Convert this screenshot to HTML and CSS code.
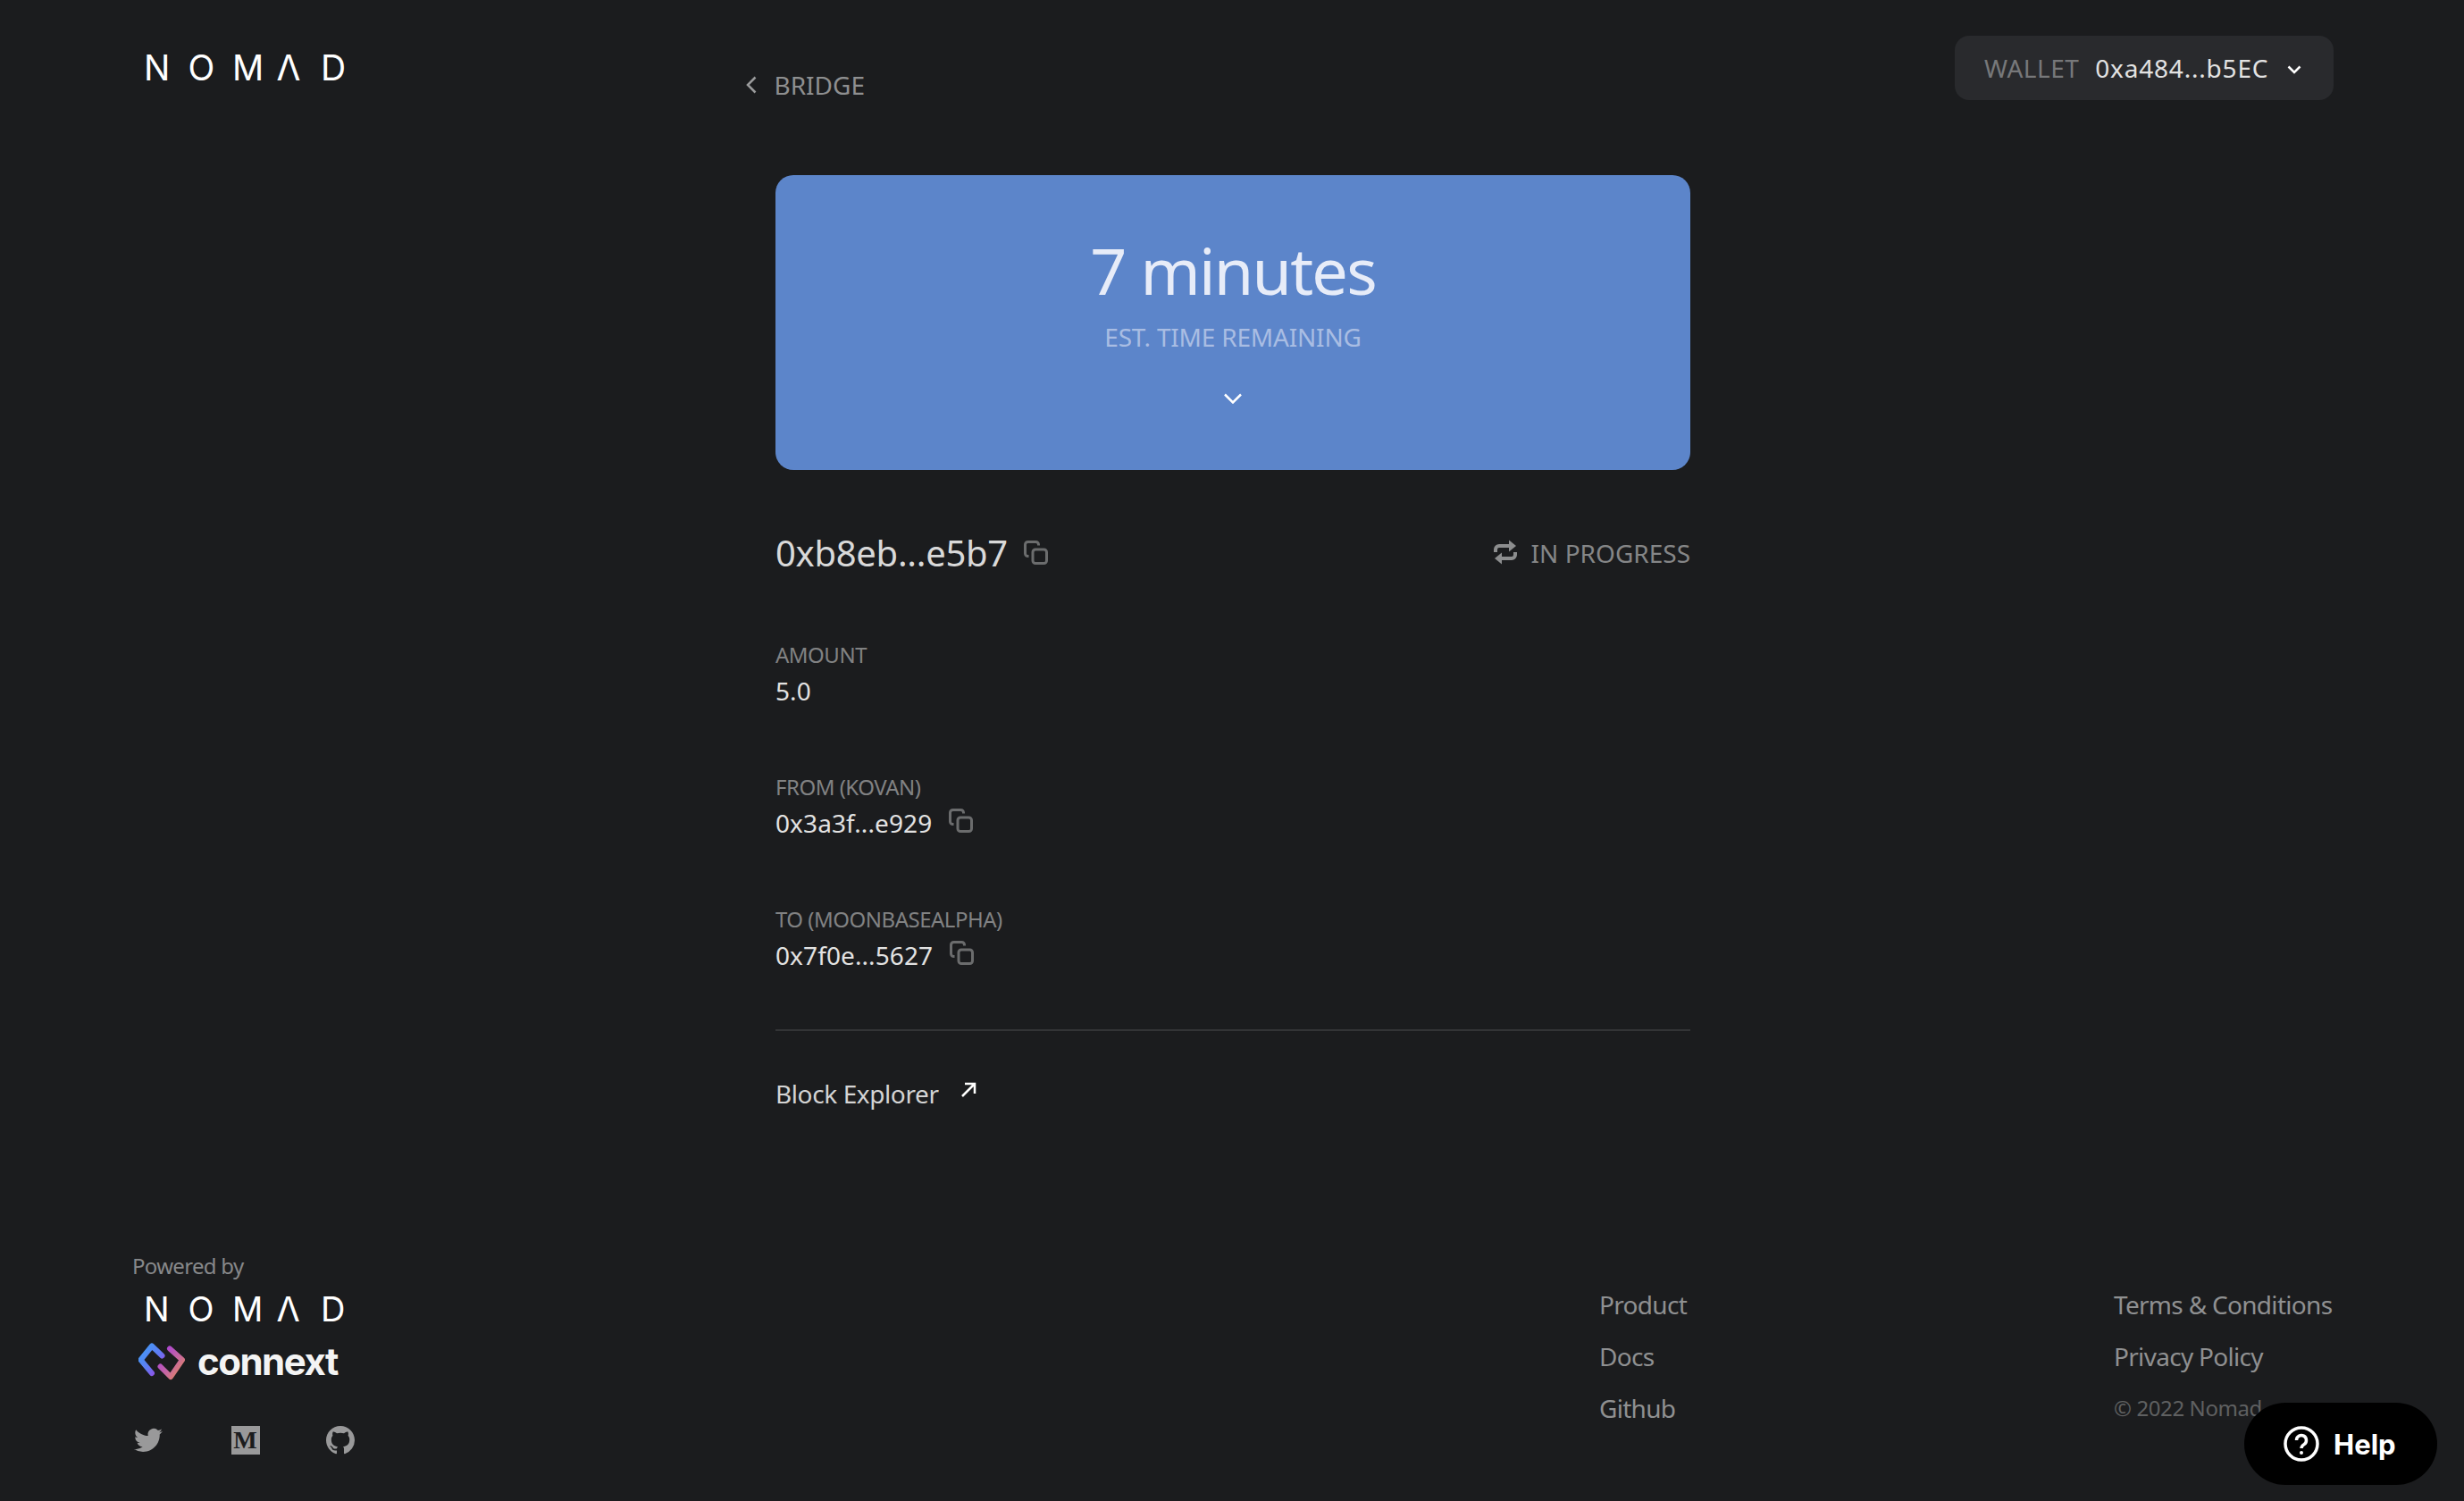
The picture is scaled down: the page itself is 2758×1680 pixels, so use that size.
FILE: index.html
```html
<!DOCTYPE html>
<html lang="en">
<head>
  <meta charset="UTF-8" />
  <title>Nomad Bridge</title>
  <link rel="stylesheet" href="styles.css">
</head>
<body>
  <svg class="defs" aria-hidden="true">
    <symbol id="copy" viewBox="0 0 27 27">
      <rect x="10" y="10" width="15.5" height="15.5" rx="3"/>
      <path d="M5.5 17.5H4.5A3 3 0 0 1 1.500 14.500V4.500A3 3 0 0 1 4.500 1.500H13.500A3 3 0 0 1 16.500 4.500V5.500"/>
    </symbol>
  </svg>

  <header class="topbar">
    <a class="logo">
      <span>N</span><span>O</span><span>M</span><span>Λ</span><span>D</span>
    </a>
    <a class="back">
      <svg class="back-icon" viewBox="0 0 12 20"><path d="M10.500 1.500 2 10 10.500 18.500"/></svg>
      BRIDGE
    </a>
    <button class="wallet">
      <span class="wallet-label">WALLET</span>
      <span class="wallet-address">0xa484...b5EC</span>
      <svg class="wallet-icon" viewBox="0 0 16 10"><path d="M1.500 1.500 8 8l6.500-6.500"/></svg>
    </button>
  </header>

  <main class="transfer">
    <section class="hero">
      <div class="hero-time">7 minutes</div>
      <div class="hero-label">EST. TIME REMAINING</div>
      <svg class="hero-icon" viewBox="0 0 22 12"><path d="M2 1.500 11 10.500 20 1.500"/></svg>
    </section>

    <div class="status-row">
      <div class="hash">
        <span>0xb8eb...e5b7</span>
        <svg class="copy"><use href="#copy"/></svg>
      </div>
      <div class="status">
        <svg class="status-icon" viewBox="0 0 26 28">
          <path d="M2 14V11A4 4 0 0 1 6 7H20"/>
          <path d="M24 14V17A4 4 0 0 1 20 21H6"/>
          <path class="arrowhead" d="M17 0.500 25 7 17 13.500Z"/>
          <path class="arrowhead" d="M9 14.500 1 21 9 27.500Z"/>
        </svg>
        IN PROGRESS
      </div>
    </div>

    <div class="detail">
      <div class="detail-label">AMOUNT</div>
      <div class="detail-value">5.0</div>
    </div>
    <div class="detail">
      <div class="detail-label">FROM (KOVAN)</div>
      <div class="detail-value">0x3a3f...e929 <svg class="copy"><use href="#copy"/></svg></div>
    </div>
    <div class="detail">
      <div class="detail-label">TO (MOONBASEALPHA)</div>
      <div class="detail-value">0x7f0e...5627 <svg class="copy"><use href="#copy"/></svg></div>
    </div>

    <a class="explorer">
      Block Explorer
      <svg class="explorer-icon" viewBox="0 0 18 18"><path d="M2 16 16 2M5 2H16V13"/></svg>
    </a>
  </main>

  <footer class="footer">
    <div class="powered">
      <div class="powered-label">Powered by</div>
      <a class="logo logo-small">
        <span>N</span><span>O</span><span>M</span><span>Λ</span><span>D</span>
      </a>
      <div class="connext">
        <svg class="connext-icon" viewBox="0 0 52 42">
          <defs>
            <linearGradient id="connextLeft" x1="0" y1="0" x2="1" y2="1">
              <stop offset="0" stop-color="#3f9cf5"/>
              <stop offset="0.55" stop-color="#5f7cf3"/>
              <stop offset="1" stop-color="#a63de0"/>
            </linearGradient>
            <linearGradient id="connextRight" x1="0" y1="0" x2="1" y2="1">
              <stop offset="0" stop-color="#a63de0"/>
              <stop offset="0.6" stop-color="#c86a9c"/>
              <stop offset="1" stop-color="#e88a55"/>
            </linearGradient>
          </defs>
          <path stroke="url(#connextLeft)" d="M26.500 14.500 15 3.500 2.500 19 15 34"/>
          <path stroke="url(#connextRight)" d="M35 6.500 49 19 36 38 24.500 26.500"/>
        </svg>
        <span>connext</span>
      </div>
      <div class="socials">
        <svg class="social twitter" viewBox="0 0 24 24"><path d="M23.953 4.570a10 10 0 0 1-2.825.775 4.958 4.958 0 0 0 2.163-2.723c-.951.555-2.005.959-3.127 1.184a4.920 4.920 0 0 0-8.384 4.482C7.690 8.095 4.067 6.130 1.640 3.162a4.822 4.822 0 0 0-.666 2.475c0 1.710.870 3.213 2.188 4.096a4.904 4.904 0 0 1-2.228-.616v.060a4.923 4.923 0 0 0 3.946 4.827 4.996 4.996 0 0 1-2.212.085 4.936 4.936 0 0 0 4.604 3.417 9.867 9.867 0 0 1-6.102 2.105c-.390 0-.779-.023-1.170-.067a13.995 13.995 0 0 0 7.557 2.209c9.053 0 13.998-7.496 13.998-13.985 0-.210 0-.420-.015-.630A9.935 9.935 0 0 0 24 4.590z"/></svg>
        <span class="medium">M</span>
        <svg class="social github" viewBox="0 0 16 16"><path d="M8 0C3.580 0 0 3.580 0 8c0 3.540 2.290 6.530 5.470 7.590.400.070.550-.170.550-.380 0-.190-.010-.820-.010-1.490-2.010.370-2.530-.490-2.690-.940-.090-.230-.480-.940-.820-1.130-.280-.150-.680-.520-.010-.530.630-.010 1.080.580 1.230.820.720 1.210 1.870.870 2.330.660.070-.520.280-.870.510-1.070-1.780-.200-3.640-.890-3.640-3.950 0-.870.310-1.590.820-2.150-.080-.200-.360-1.020.080-2.120 0 0 .670-.210 2.200.820.640-.180 1.320-.270 2-.270.680 0 1.360.090 2 .270 1.530-1.040 2.200-.820 2.200-.820.440 1.100.160 1.920.080 2.120.510.560.820 1.270.820 2.150 0 3.070-1.870 3.750-3.650 3.950.290.250.540.730.540 1.480 0 1.070-.010 1.930-.010 2.200 0 .210.150.460.550.380A8.013 8.013 0 0 0 16 8c0-4.420-3.580-8-8-8z"/></svg>
      </div>
    </div>

    <nav class="footer-links">
      <a>Product</a>
      <a>Docs</a>
      <a>Github</a>
    </nav>

    <nav class="footer-links">
      <a>Terms &amp; Conditions</a>
      <a>Privacy Policy</a>
      <span class="copyright">© 2022 Nomad</span>
    </nav>
  </footer>

  <button class="help">
    <svg class="help-icon" viewBox="0 0 40 40">
      <circle cx="20" cy="20" r="18"/>
      <path d="M14.500 16a5.500 5.500 0 1 1 8.500 4.600c-2 1.300-3 2.200-3 4.400"/>
      <circle class="help-dot" cx="20" cy="30" r="2"/>
    </svg>
    Help
  </button>
</body>
</html>
```

FILE: styles.css
```css
* {
  box-sizing: border-box;
}

html, body {
  margin: 0;
  height: 100%;
}

body {
  display: flex;
  flex-direction: column;
  height: 1680px;
  overflow: hidden;
  font-family: "Noto Sans", sans-serif;
  font-size: 28px;
  background-color: #1b1c1e;
  color: #e2e2e2;
}

.defs {
  display: none;
}

svg {
  flex: none;
}

.copy {
  width: 27px;
  height: 27px;
  fill: none;
  stroke: #6b6c6d;
  stroke-width: 3;
}

/* top bar */
.topbar {
  display: grid;
  grid-template-columns: 1fr 1024px 1fr;
  padding: 40px 146px 0 161px;
  height: 112px;
}

.logo {
  display: flex;
  gap: 24.5px;
  margin-top: 19px;
  font-family: Inter, sans-serif;
  font-size: 39px;
  line-height: 34px;
  color: #fff;
}

.logo span {
  width: 25px;
  display: block;
  text-align: center;
}

.back {
  display: flex;
  align-items: center;
  align-self: start;
  gap: 20px;
  margin: 37px 0 0 -40px;
  line-height: 36px;
  color: #8e8f90;
}

.back-icon {
  width: 12px;
  height: 20px;
  fill: none;
  stroke: #9a9b9c;
  stroke-width: 2.500;
}

.wallet {
  justify-self: end;
  display: flex;
  align-items: center;
  width: 424px;
  height: 72px;
  padding: 0 35px 0 33px;
  border: none;
  border-radius: 16px;
  background: #292a2d;
  font: inherit;
  color: #e2e2e2;
}

.wallet-label {
  margin-right: 18px;
  letter-spacing: 0.5px;
  color: #77787a;
}

.wallet-address {
  letter-spacing: 0.8px;
}

.wallet-icon {
  width: 16px;
  height: 10px;
  margin: 4px 1px 0 auto;
  fill: none;
  stroke: #fff;
  stroke-width: 2.500;
}

/* transfer details */
.transfer {
  width: 1024px;
  margin: 84px 0 0 868px;
}

.hero {
  display: flex;
  flex-direction: column;
  align-items: center;
  height: 330px;
  padding-top: 61px;
  border-radius: 20px;
  background-color: #5c85ca;
}

.hero-time {
  font-size: 72px;
  letter-spacing: -1.800px;
  line-height: 90px;
  color: #e7ecf8;
}

.hero-label {
  margin-top: 12px;
  letter-spacing: -0.2px;
  line-height: 36px;
  color: #a9bde3;
}

.hero-icon {
  width: 22px;
  height: 12px;
  margin-top: 45px;
  fill: none;
  stroke: #fff;
  stroke-width: 2.500;
}

.status-row {
  display: flex;
  justify-content: space-between;
  align-items: center;
  margin: 67px 0 72px;
  height: 52px;
}

.hash {
  display: flex;
  align-items: center;
  gap: 18px;
  font-size: 40px;
  letter-spacing: -0.3px;
  line-height: 52px;
  color: #d9d9d9;
}

.hash .copy {
  margin-top: -2px;
}

.status {
  display: flex;
  align-items: center;
  gap: 16px;
  color: #858687;
}

.status-icon {
  width: 26px;
  height: 28px;
  margin-top: -2px;
  fill: none;
  stroke: #8c8d8e;
  stroke-width: 4;
}

.arrowhead {
  fill: #8c8d8e;
  stroke: none;
}

.detail + .detail {
  margin-top: 74px;
}

.detail-label {
  font-size: 24px;
  letter-spacing: -0.5px;
  line-height: 32px;
  color: #818283;
}

.detail-value {
  display: flex;
  align-items: center;
  gap: 19px;
  margin-top: 6px;
  letter-spacing: 0.1px;
  line-height: 36px;
  color: #e2e2e2;
}

.detail-value .copy {
  margin-top: -6px;
}

.explorer {
  display: flex;
  align-items: flex-start;
  gap: 24px;
  margin-top: 65px;
  padding-top: 52px;
  border-top: 2px solid #333436;
  letter-spacing: -0.4px;
  line-height: 36px;
  color: #d4d4d4;
}

.explorer-icon {
  width: 18px;
  height: 18px;
  margin-top: 5px;
  fill: none;
  stroke: #fff;
  stroke-width: 2.500;
}

/* footer */
.footer {
  display: grid;
  grid-template-columns: 1642px 576px auto;
  margin-top: auto;
  padding: 0 0 52px 148px;
}

.powered-label {
  font-size: 24px;
  letter-spacing: -0.7px;
  line-height: 32px;
  color: #87888a;
}

.logo-small {
  margin: 16px 0 0 13px;
  font-size: 38px;
  line-height: 32px;
}

.connext {
  display: flex;
  align-items: center;
  gap: 14px;
  margin: 22px 0 0 7px;
  font-family: Inter, sans-serif;
  font-size: 42px;
  font-weight: 700;
  letter-spacing: -1.500px;
  line-height: 42px;
  color: #f4f4f4;
}

.connext-icon {
  width: 52px;
  height: 42px;
  fill: none;
  stroke-width: 6;
  stroke-linecap: round;
  stroke-linejoin: round;
}

.socials {
  display: flex;
  align-items: center;
  gap: 74.5px;
  margin-top: 51.5px;
}

.social {
  fill: #99999a;
}

.twitter {
  width: 36px;
  height: 32px;
}

.github {
  width: 32px;
  height: 32px;
}

.medium {
  width: 32px;
  height: 32px;
  background: #99999a;
  font-family: "Liberation Serif", serif;
  font-size: 28px;
  font-weight: 700;
  line-height: 32px;
  text-align: center;
  color: #1b1c1e;
}

.footer-links {
  display: flex;
  flex-direction: column;
  gap: 22px;
  padding-top: 41px;
  letter-spacing: -0.7px;
  line-height: 36px;
  color: #8f9091;
}

.copyright {
  font-size: 24px;
  letter-spacing: -0.4px;
  color: #5f6061;
}

.help {
  position: absolute;
  left: 2512px;
  top: 1570px;
  display: flex;
  align-items: center;
  gap: 16px;
  width: 216px;
  height: 92px;
  padding: 0 0 0 44px;
  border: none;
  border-radius: 46px;
  background: #000;
  font-family: Inter, sans-serif;
  font-size: 31px;
  font-weight: 700;
  color: #fff;
}

.help-icon {
  width: 40px;
  height: 40px;
  fill: none;
  stroke: #fff;
  stroke-width: 3.500;
}

.help-dot {
  fill: #fff;
  stroke: none;
}
```
